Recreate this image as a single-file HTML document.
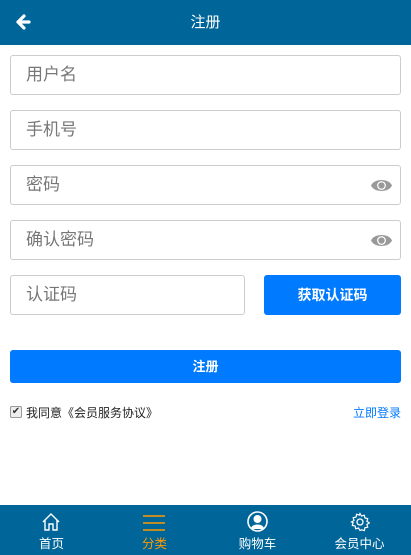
<!DOCTYPE html><html><head><meta charset="utf-8"><style>
*{margin:0;padding:0;box-sizing:border-box}
body{width:411px;height:555px;position:relative;background:#fff;font-family:"Liberation Sans","Noto Sans CJK SC",sans-serif;overflow:hidden}
.hd{position:absolute;top:0;left:0;width:411px;height:45px;background:#006699;color:#fff;text-align:center;line-height:45px;font-size:15px}
.in{position:absolute;left:10px;width:391px;height:40px;border:1px solid #ccc;border-radius:3px;font-size:17px;color:#777;line-height:38px;padding-left:15px}
.eye{position:absolute;right:8px;top:12px}
.btn{position:absolute;background:#007aff;color:#fff;border-radius:3px;text-align:center;font-size:14px;font-weight:bold}
.ft{position:absolute;left:0;top:505px;width:411px;height:50px;background:#006699}
.ft div{position:absolute;top:0;width:103px;text-align:center;color:#fff;font-size:12.5px}
.ft span{position:absolute;left:0;right:0;top:28px}
</style></head><body>
<div class="hd">注册</div>
<svg style="position:absolute;left:15px;top:14px" width="16" height="16" viewBox="0 0 16 16"><path d="M9 2L3 8l6 6M3 8h11" stroke="#fff" stroke-width="3.2" fill="none" stroke-linecap="round" stroke-linejoin="round"/></svg>
<div class="in" style="top:55px">用户名</div>
<div class="in" style="top:110px">手机号</div>
<div class="in" style="top:165px">密码<svg class="eye" width="21" height="15" viewBox="0 0 20 14"><path d="M0 7C3 0 17 0 20 7C17 14 3 14 0 7Z" fill="#999"/><circle cx="10" cy="7" r="4.2" fill="#fff"/><circle cx="10" cy="7" r="3" fill="#999"/></svg></div>
<div class="in" style="top:220px">确认密码<svg class="eye" width="21" height="15" viewBox="0 0 20 14"><path d="M0 7C3 0 17 0 20 7C17 14 3 14 0 7Z" fill="#999"/><circle cx="10" cy="7" r="4.2" fill="#fff"/><circle cx="10" cy="7" r="3" fill="#999"/></svg></div>
<div class="in" style="top:275px;width:235px">认证码</div>
<div class="btn" style="left:264px;top:275px;width:137px;height:40px;line-height:40px">获取认证码</div>
<div class="btn" style="left:10px;top:350px;width:391px;height:33px;line-height:33px;font-size:13px">注册</div>
<div style="position:absolute;left:10px;top:406px;width:12px;height:12px;border:1px solid #999;border-radius:2px;background:#eee;font-size:10px;line-height:10px;text-align:center;color:#333">✔</div>
<div style="position:absolute;left:26px;top:404px;font-size:12px;color:#222">我同意《会员服务协议》</div>
<div style="position:absolute;right:10px;top:404px;font-size:12px;color:#007aff">立即登录</div>
<div class="ft">
<div style="left:0"><svg style="position:absolute;left:41px;top:7px" width="20" height="20" viewBox="0 0 20 20"><path d="M2 10L10 2l8 8M4 8v10h4v-6h4v6h4V8" stroke="#fff" stroke-width="1.4" fill="none"/></svg><span>首页</span></div>
<div style="left:103px;color:#f90"><svg style="position:absolute;left:40px;top:10px" width="22" height="16"><path d="M0 1h22M0 8h22M0 15h22" stroke="#f90" stroke-width="1.4"/></svg><span>分类</span></div>
<div style="left:206px"><svg style="position:absolute;left:41px;top:6px" width="21" height="21" viewBox="0 0 21 21"><circle cx="10.5" cy="10.5" r="9.5" stroke="#fff" stroke-width="1.6" fill="none"/><circle cx="10.5" cy="8" r="4" fill="#fff"/><path d="M4 18c0-6 13-6 13 0z" fill="#fff"/></svg><span>购物车</span></div>
<div style="left:308px"><svg style="position:absolute;left:42px;top:7px" width="20" height="20" viewBox="0 0 20 20"><circle cx="10" cy="10" r="3" stroke="#fff" stroke-width="1.3" fill="none"/><path d="M10 1.5l1.5 2.5 2.8-.8.6 2.8 2.8.6-.8 2.8 2.5 1.5-2.5 1.5.8 2.8-2.8.6-.6 2.8-2.8-.8L10 18.5l-1.5-2.5-2.8.8-.6-2.8-2.8-.6.8-2.8L1.5 10l2.5-1.5-.8-2.8 2.8-.6.6-2.8 2.8.8z" stroke="#fff" stroke-width="1.2" fill="none"/></svg><span>会员中心</span></div>
</div>
</body></html>
